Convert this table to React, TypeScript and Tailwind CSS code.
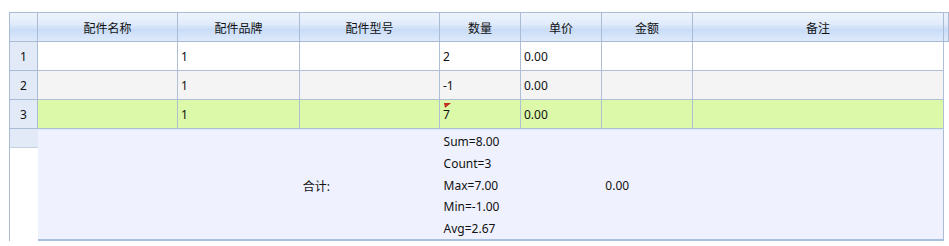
import React from "react";

const W = ["w-[140px]", "w-[122px]", "w-[140px]", "w-[81px]", "w-[81px]", "w-[91px]", "w-[251px]"];
const headers = ["配件名称", "配件品牌", "配件型号", "数量", "单价", "金额", "备注"];

const rows = [
  { n: "1", bg: "bg-white", cells: ["", "1", "", "2", "0.00", "", ""] },
  { n: "2", bg: "bg-[#f4f4f4]", cells: ["", "1", "", "-1", "0.00", "", ""] },
  { n: "3", bg: "bg-[#dcf8a9]", cells: ["", "1", "", "7", "0.00", "", ""], dirty: 3 },
];

const hdrBg =
  "bg-[linear-gradient(180deg,#edf4fd_0%,#e0ebfb_40%,#c9dcf7_60%,#d6e5fa_85%,#dfeafb_100%)]";

export default function App() {
  return (
    <div
      className="w-[949px] h-[246px] bg-white pt-[12px] pl-[9px] text-[12px] text-[#111]"
      style={{ fontFamily: '"Noto Sans", "Noto Sans CJK SC", sans-serif' }}
    >
      <div className="border-l border-[#a9bcd4] w-fit">
        {/* header */}
        <div className="flex border-t border-[#a9bcd4]">
          <div className={`w-[28px] h-[29px] border-r border-b border-[#a9bcd4] ${hdrBg}`} />
          {headers.map((h, i) => (
            <div
              key={h}
              className={`${W[i]} h-[29px] border-r border-b border-[#a9bcd4] ${hdrBg} flex items-center justify-center leading-none pt-[4px]`}
            >
              {h}
            </div>
          ))}
          <div className={`w-[5px] h-[29px] border-r border-b border-[#a9bcd4] ${hdrBg}`} />
        </div>
        {/* body rows */}
        {rows.map((r) => (
          <div key={r.n} className="flex">
            <div className="w-[28px] h-[29px] border-r border-b border-[#a9bcd4] bg-[#e2eaf7] flex items-center justify-center leading-none pt-[1px]">
              {r.n}
            </div>
            {r.cells.map((c, i) => (
              <div
                key={i}
                className={`${W[i]} h-[29px] border-r border-b border-[#afbfd6] ${r.bg} relative flex items-center pl-[3px] leading-none pt-[1px]`}
              >
                {r.dirty === i && (
                  <svg className="absolute left-[4px] top-[3px]" width="7" height="5" viewBox="0 0 7 5">
                    <polygon points="0,0 7,0 1,5" fill="#c0301c" />
                  </svg>
                )}
                {c}
              </div>
            ))}
          </div>
        ))}
        {/* summary */}
        <div className="flex">
          <div className="w-[28px] flex flex-col">
            <div className="h-[19px] bg-[#e2eaf7] border-b border-[#c5d2e4]" />
            <div className="flex-1 bg-white" />
          </div>
          <div className="w-[906px] h-[112px] bg-[#eff2fe] border-t border-[#d6ecef] border-r border-r-[#a9bcd4] border-b-2 border-b-[#a9bfe0] flex">
            <div className={W[0]} />
            <div className={W[1]} />
            <div className={`${W[2]} flex items-center pl-[3px] pt-[4px]`}>合计:</div>
            <div className={`${W[3]} pl-[4px] pt-[1px] leading-[21.75px] whitespace-nowrap`}>
              <div>Sum=8.00</div>
              <div>Count=3</div>
              <div>Max=7.00</div>
              <div>Min=-1.00</div>
              <div>Avg=2.67</div>
            </div>
            <div className={W[4]} />
            <div className={`${W[5]} flex items-center pl-[4px] pt-[3px]`}>0.00</div>
            <div className={W[6]} />
          </div>
        </div>
      </div>
    </div>
  );
}
